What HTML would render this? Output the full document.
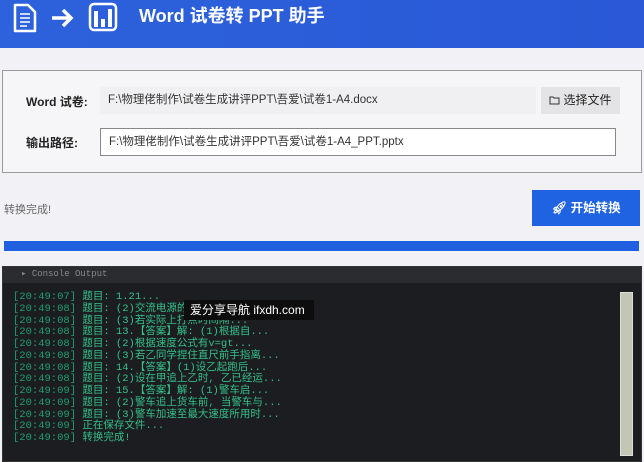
<!DOCTYPE html>
<html><head><meta charset="utf-8"><style>
*{margin:0;padding:0;box-sizing:border-box}
body{width:644px;height:462px;background:#f2f2f6;font-family:"Liberation Sans","Noto Sans CJK SC",sans-serif;position:relative;overflow:hidden}
.hdr{position:absolute;left:0;top:0;width:644px;height:48px;background:linear-gradient(90deg,#2d62dc,#2a58d6)}
.ttl{position:absolute;left:139px;top:5px;color:#fff;font-size:18px;font-weight:bold;line-height:22px}
.panel{position:absolute;left:2px;top:70px;width:640px;height:103px;border:1px solid #9a9a9a;background:#f6f6f8}
.lbl{position:absolute;font-size:12px;font-weight:bold;color:#222}
.inp{position:absolute;font-size:11.5px;color:#333;padding-left:8px;line-height:27px}
.btn{position:absolute;left:541px;top:87px;width:79px;height:27px;background:#e4e4e6;font-size:12px;color:#222;line-height:27px;text-align:center}
.go{position:absolute;left:532px;top:190px;width:108px;height:36px;background:#1f62e2;color:#fff;font-size:12.5px;font-weight:bold;line-height:36px;text-align:center}
.bar{position:absolute;left:4px;top:241px;width:635px;height:10px;background:#1f5fe0}
.con{position:absolute;left:2px;top:266px;width:640px;height:196px;background:#1c1d20;border:1px solid #333}
.ch{height:16px;background:#2b2c30;color:#888;font-family:"Liberation Mono",monospace;font-size:9px;line-height:14px;padding-left:18px}
.log{position:absolute;left:10px;top:25px;font-family:"Liberation Mono","Noto Sans CJK SC",monospace;font-size:10.5px;line-height:11.75px;color:#33c08a;white-space:pre}
.log span{color:#1f9e6e}
.sb{position:absolute;left:617px;top:25px;width:13px;height:164px;background:#c2c6b3;border:1px solid #ddd}
.wm{position:absolute;left:184px;top:300px;width:130px;height:20px;background:#0d0d0d;color:#fff;font-size:12px;line-height:20px;padding-left:6px}
</style></head><body>
<div class="hdr">
<svg style="position:absolute;left:12px;top:3px" width="26" height="30" viewBox="0 0 26 30"><path d="M3 2h13l7 7v19H3z" fill="#2e62dc" stroke="#fff" stroke-width="2.5" stroke-linejoin="round"/><path d="M8 11h10M8 15h10M8 19h10M8 23h7" stroke="#fff" stroke-width="1.6"/></svg>
<svg style="position:absolute;left:50px;top:7px" width="26" height="22" viewBox="0 0 26 22"><path d="M2 11h19M13 3l8 8-8 8" fill="none" stroke="#fff" stroke-width="3.5" stroke-linejoin="miter"/></svg>
<svg style="position:absolute;left:88px;top:2px" width="30" height="30" viewBox="0 0 30 30"><rect x="2" y="2" width="26" height="26" rx="4" fill="none" stroke="#fff" stroke-width="2.5"/><rect x="6" y="9" width="4" height="16" fill="#fff"/><rect x="13" y="17" width="4" height="8" fill="#fff"/><rect x="20" y="7" width="4" height="18" fill="#fff"/></svg>
<div class="ttl">Word 试卷转 PPT 助手</div>
</div>
<div class="panel"></div>
<div class="lbl" style="left:26px;top:93px">Word 试卷:</div>
<div class="inp" style="left:100px;top:87px;width:436px;height:27px;background:#f0f0f2">F:\物理佬制作\试卷生成讲评PPT\吾爱\试卷1-A4.docx</div>
<div class="btn"><svg width="11" height="10" viewBox="0 0 11 10" style="vertical-align:-1px;margin-right:3px"><path d="M1 2h3l1 1h5v6H1z" fill="none" stroke="#333" stroke-width="1"/></svg>选择文件</div>
<div class="lbl" style="left:26px;top:134px">输出路径:</div>
<div class="inp" style="left:100px;top:128px;width:516px;height:28px;background:#fff;border:1px solid #888">F:\物理佬制作\试卷生成讲评PPT\吾爱\试卷1-A4_PPT.pptx</div>
<div style="position:absolute;left:4px;top:201px;font-size:11px;color:#666">转换完成!</div>
<div class="go">&#x1F680;&#xFE0E; 开始转换</div>
<div class="bar"></div>
<div class="con"><div class="ch">▸ Console Output</div>
<div class="log"><span>[20:49:07]</span> 题目: 1.21...
<span>[20:49:08]</span> 题目: (2)交流电源的频...
<span>[20:49:08]</span> 题目: (3)若实际上打点时间隔...
<span>[20:49:08]</span> 题目: 13.【答案】解: (1)根据自...
<span>[20:49:08]</span> 题目: (2)根据速度公式有v=gt...
<span>[20:49:08]</span> 题目: (3)若乙同学捏住直尺前手指离...
<span>[20:49:08]</span> 题目: 14.【答案】(1)设乙起跑后...
<span>[20:49:08]</span> 题目: (2)设在甲追上乙时, 乙已经运...
<span>[20:49:09]</span> 题目: 15.【答案】解: (1)警车启...
<span>[20:49:09]</span> 题目: (2)警车追上货车前, 当警车与...
<span>[20:49:09]</span> 题目: (3)警车加速至最大速度所用时...
<span>[20:49:09]</span> 正在保存文件...
<span>[20:49:09]</span> 转换完成!</div>
<div class="sb"></div>
</div>
<div class="wm">爱分享导航 ifxdh.com</div>
</body></html>
